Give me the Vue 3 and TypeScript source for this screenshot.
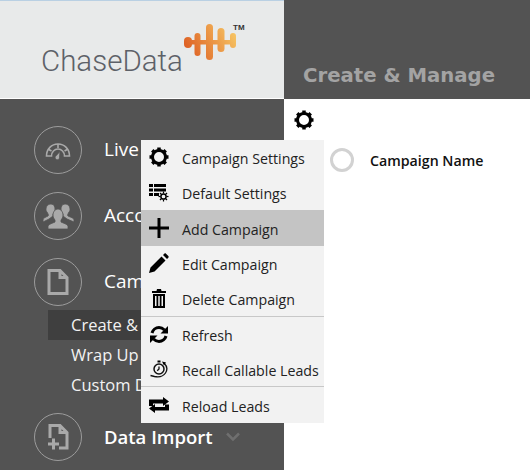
<template>
  <div class="page">
    <aside class="sidebar">
      <div class="logo">
        <span class="logo-text">ChaseData</span>
        <svg class="logo-mark" width="54" height="40" viewBox="0 0 54 40">
          <defs>
            <linearGradient id="wave" gradientUnits="userSpaceOnUse" x1="4" y1="34" x2="50" y2="8">
              <stop offset="0" stop-color="#dc5a20" />
              <stop offset="1" stop-color="#f6c463" />
            </linearGradient>
          </defs>
          <rect x="4" y="18" width="46" height="4.500" fill="url(#wave)" />
          <rect v-for="b in waveBars" :key="b.x" :x="b.x" :y="b.y" :width="b.w" :height="b.h" :rx="b.w / 2" fill="url(#wave)" />
        </svg>
        <span class="tm">TM</span>
      </div>
      <nav class="nav">
        <div class="nav-item">
          <span class="nav-icon">
            <svg width="28" height="22" viewBox="0 0 28 22">
              <path class="gauge" d="M2.500 17c0-7 5-12 11.500-12s11.500 5 11.500 12h-5c0-4-3-7-6.500-7s-6.500 3-6.500 7z" />
              <path class="gauge" d="M7.500 12l-3.500-2M14 5v4M20.500 12l3.500-2" />
              <path class="solid" d="M16 12.500l-.5 6a2.200 2.200 0 1 1-3.400-1.800z" />
            </svg>
          </span>
          <span class="nav-label">Live Stats</span>
        </div>
        <div class="nav-item">
          <span class="nav-icon">
            <svg width="34" height="30" viewBox="0 0 34 30">
              <path class="solid" d="M10 3c3 0 4 3 4 5s-1 4-2 5v2l-4 3-6 3v-2c0-2 3-3 5-4 1-1 0-2-1-4-1-1-1-2-1-3 0-3 2-5 5-5z" />
              <path class="solid" d="M24 3c-3 0-4 3-4 5s1 4 2 5v2l4 3 7 3v-2c0-2-4-3-6-4-1-1 0-2 1-4 1-1 1-2 1-3 0-3-2-5-5-5z" />
              <path class="solid" d="M17 8c3 0 5 3 5 6 0 2-1 4-2 5v2c2 1 6 2 7 4v3H7v-3c1-2 5-3 7-4v-2c-1-1-2-3-2-5 0-3 2-6 5-6z" />
            </svg>
          </span>
          <span class="nav-label">Accounts</span>
        </div>
        <div class="nav-item">
          <span class="nav-icon">
            <svg width="24" height="28" viewBox="0 0 24 28">
              <path class="outline" d="M3 2.500h11l7 7v16H3zM14 2.500v7h7" />
            </svg>
          </span>
          <span class="nav-label">Campaigns</span>
        </div>
        <ul class="sub-nav">
          <li class="active">Create &amp; Manage</li>
          <li>Wrap Up Codes</li>
          <li>Custom Data</li>
        </ul>
        <div class="nav-item import">
          <span class="nav-icon">
            <svg width="24" height="28" viewBox="0 0 24 28">
              <path class="outline" d="M4 15V2.500h10l7 7v15.500H13M14 2.500v7h7" />
              <path class="outline" d="M2 21h11M7.500 15.500v11" />
            </svg>
          </span>
          <span class="nav-label strong">Data Import</span>
          <svg class="chevron" width="14" height="10" viewBox="0 0 14 10">
            <path d="M1 1.500l6 6 6-6" />
          </svg>
        </div>
      </nav>
    </aside>

    <main class="content">
      <header class="content-header">Create &amp; Manage</header>
      <div class="toolbar">
        <svg width="20" height="20" viewBox="0 0 20 20">
          <circle class="gear-ring" cx="10" cy="10" r="6.500" />
          <path v-for="a in teeth" :key="a" class="gear-tooth" d="M10 .500v3" :transform="`rotate(${a} 10 10)`" />
        </svg>
      </div>
      <div class="grid-head">
        <span class="radio"></span>
        <span class="col-name">Campaign Name</span>
      </div>
    </main>

    <div class="menu">
      <div
        v-for="item in menuItems"
        :key="item.label"
        class="menu-item"
        :class="{ hover: item.hover, divided: item.divided }"
      >
        <span class="menu-icon">
          <svg v-if="item.icon === 'gear'" width="20" height="20" viewBox="0 0 20 20">
            <circle class="gear-ring" cx="10" cy="10" r="6.500" />
            <path v-for="a in teeth" :key="a" class="gear-tooth" d="M10 .500v3" :transform="`rotate(${a} 10 10)`" />
          </svg>
          <svg v-else-if="item.icon === 'list'" width="20" height="18" viewBox="0 0 20 18">
            <path d="M0 0h4v3H0zM5 0h12v3H5zM0 4.500h4v3H0zM5 4.500h12v3H5zM0 9h4v3H0zM5 9h5v3H5z" />
            <circle class="mini-ring" cx="14.500" cy="12.500" r="2.600" />
            <path v-for="a in teeth" :key="a" class="mini-tooth" d="M14.500 7.500v2" :transform="`rotate(${a} 14.500 12.500)`" />
          </svg>
          <svg v-else-if="item.icon === 'plus'" width="20" height="20" viewBox="0 0 20 20">
            <path d="M0 8.500h20v3H0zM8.500 0h3v20h-3z" />
          </svg>
          <svg v-else-if="item.icon === 'pencil'" width="20" height="20" viewBox="0 0 20 20">
            <path d="M0 20l1.500-5.500L12.500 3.500l4 4L5.500 18.500zM14 2l1.300-1.300c.6-.5 1.200-.5 1.700 0l2.300 2.300c.5.5.5 1.100 0 1.700L18 6z" />
          </svg>
          <svg v-else-if="item.icon === 'trash'" width="14" height="19" viewBox="0 0 14 19">
            <path d="M5 0h4l.5 2H14v2H0V2h4.500zM1 5h12v14H1zM3 7v10h1.500V7zM6.250 7v10h1.500V7zM9.500 7v10H11V7z" fill-rule="evenodd" />
          </svg>
          <svg v-else-if="item.icon === 'refresh'" width="18" height="19" viewBox="0 0 18 19">
            <path class="arc" d="M2 8c.8-3 3.700-5.500 7-5.500 2.200 0 4 1 5.500 2.500" />
            <path d="M18 1v7.500h-7.500z" />
            <path class="arc" d="M16 11c-.8 3-3.700 5.500-7 5.500-2.200 0-4-1-5.500-2.500" />
            <path d="M0 18v-7.500h7.500z" />
          </svg>
          <svg v-else-if="item.icon === 'timer'" width="20" height="18" viewBox="0 0 20 18">
            <circle class="thin-ring" cx="10" cy="9" r="5" />
            <path class="hand" d="M10 6.500V9l-1.800 1.800" />
            <path d="M8.500 .500h3v2h-3z" />
            <path class="hand" d="M15 3c3 3 3.500 7 1.500 10-2 3-6 4.500-11 3.500l-4-1" />
            <path d="M13 1.500l4 1-2 3z" />
          </svg>
          <svg v-else width="20" height="16" viewBox="0 0 20 16">
            <path d="M14 0l6 4.500L14 9V6.500H4V9H0V2.500h14zM6 7v3h10V7.500h4V13.500H6V16L0 11.500z" />
          </svg>
        </span>
        <span class="menu-label">{{ item.label }}</span>
      </div>
    </div>
  </div>
</template>

<script setup lang="ts">
interface MenuItem {
  label: string
  icon: string
  hover?: boolean
  divided?: boolean
}

const teeth = [0, 45, 90, 135, 180, 225, 270, 315]

const waveBars = [
  { x: 1, y: 15, w: 8, h: 11 },
  { x: 11.500, y: 11, w: 6, h: 23 },
  { x: 23, y: 2, w: 7, h: 36 },
  { x: 34.500, y: 6, w: 7, h: 24 },
  { x: 47, y: 11, w: 6, h: 15 }
]

const menuItems: MenuItem[] = [
  { label: 'Campaign Settings', icon: 'gear' },
  { label: 'Default Settings', icon: 'list' },
  { label: 'Add Campaign', icon: 'plus', hover: true },
  { label: 'Edit Campaign', icon: 'pencil' },
  { label: 'Delete Campaign', icon: 'trash', divided: true },
  { label: 'Refresh', icon: 'refresh' },
  { label: 'Recall Callable Leads', icon: 'timer', divided: true },
  { label: 'Reload Leads', icon: 'swap' }
]
</script>

<style>
html,
body {
  margin: 0;
  background: #fff;
  overflow: hidden;
}
</style>

<style scoped>
.page {
  position: relative;
  display: flex;
  width: 530px;
  height: 470px;
  overflow: hidden;
  font-family: "Open Sans", "Noto Sans", sans-serif;
  color: #111;
}

.sidebar {
  display: flex;
  flex-direction: column;
  width: 284px;
  flex-shrink: 0;
  background: #535353;
}

.logo {
  position: relative;
  height: 97px;
  border-top: 1px solid #b9d0e3;
  border-bottom: 1px solid #fff;
  background: #e8eaea;
}

.logo-text {
  position: absolute;
  left: 41px;
  top: 41px;
  font-family: Roboto, sans-serif;
  font-weight: 300;
  font-size: 29.500px;
  line-height: 38px;
  color: #5d6168;
}

.logo-mark {
  position: absolute;
  left: 183px;
  top: 21px;
}

.tm {
  position: absolute;
  left: 233px;
  top: 22px;
  font-family: "Liberation Sans", sans-serif;
  font-size: 8px;
  font-weight: 700;
  line-height: 10px;
  color: #333;
}

.nav {
  padding: 27px 0 0 34px;
}

.nav-item {
  display: flex;
  align-items: center;
  height: 48px;
  margin-bottom: 18px;
}

.nav-item.import {
  margin: 13px 0 0;
}

.nav-icon {
  display: flex;
  align-items: center;
  justify-content: center;
  box-sizing: border-box;
  width: 48px;
  height: 48px;
  margin-right: 22px;
  border: 1.5px solid #9c9c9c;
  border-radius: 50%;
  flex-shrink: 0;
}

.solid {
  fill: #a9a9a9;
  stroke: #535353;
  stroke-width: 0.8px;
}

.gauge {
  fill: none;
  stroke: #a9a9a9;
  stroke-width: 1.600px;
}

.outline {
  fill: none;
  stroke: #a9a9a9;
  stroke-width: 3px;
}

.nav-label {
  padding-bottom: 2px;
  font-size: 19px;
  color: #fff;
  white-space: nowrap;
}

.nav-label.strong {
  font-size: 18.500px;
  font-weight: 600;
}

.chevron {
  margin-left: 13px;
}

.chevron path {
  fill: none;
  stroke: #6f6f6f;
  stroke-width: 2.500px;
}

.sub-nav {
  list-style: none;
  margin: -14px 0 0 14px;
  padding: 0;
}

.sub-nav li {
  height: 30px;
  padding-left: 23px;
  font-size: 16.500px;
  line-height: 30px;
  color: #f2f2f2;
  white-space: nowrap;
}

.sub-nav li.active {
  background: #3f3f3f;
}

.content {
  flex: 1;
  min-width: 0;
}

.content-header {
  box-sizing: border-box;
  height: 99px;
  padding: 62px 0 0 19px;
  background: #535353;
  font-family: "DejaVu Sans", sans-serif;
  font-size: 19.700px;
  font-weight: 700;
  line-height: 28px;
  color: #a3a3a3;
}

.toolbar {
  display: flex;
  height: 20px;
  padding: 11px 0 0 10px;
}

.gear-ring {
  fill: none;
  stroke: #000;
  stroke-width: 3px;
}

.gear-tooth {
  stroke: #000;
  stroke-width: 3.500px;
}

.grid-head {
  display: flex;
  align-items: center;
  padding: 0 0 0 46px;
  margin-top: 18px;
}

.radio {
  box-sizing: border-box;
  width: 24px;
  height: 24px;
  margin-right: 16px;
  border: 3px solid #d2d2d2;
  border-radius: 50%;
}

.col-name {
  font-size: 14.200px;
  font-weight: 600;
  color: #111;
}

.menu {
  position: absolute;
  left: 141px;
  top: 139.600px;
  width: 183px;
  height: 283.200px;
  background: #f2f2f2;
}

.menu-item {
  box-sizing: border-box;
  display: flex;
  align-items: center;
  height: 35.400px;
}

.menu-item.hover {
  background: #c4c4c4;
}

.menu-item.divided {
  border-bottom: 1px solid #c8c8c8;
}

.menu-icon {
  display: flex;
  align-items: center;
  justify-content: center;
  width: 36px;
  margin-right: 5px;
  flex-shrink: 0;
}

.menu-label {
  padding-top: 2px;
  font-size: 14.200px;
  color: #222;
  white-space: nowrap;
}

.arc {
  fill: none;
  stroke: #000;
  stroke-width: 3px;
}

.thin-ring {
  fill: none;
  stroke: #111;
  stroke-width: 1.500px;
}

.hand {
  fill: none;
  stroke: #111;
  stroke-width: 1.300px;
}

.mini-ring {
  fill: none;
  stroke: #000;
  stroke-width: 1.500px;
}

.mini-tooth {
  stroke: #000;
  stroke-width: 1.200px;
}
</style>
